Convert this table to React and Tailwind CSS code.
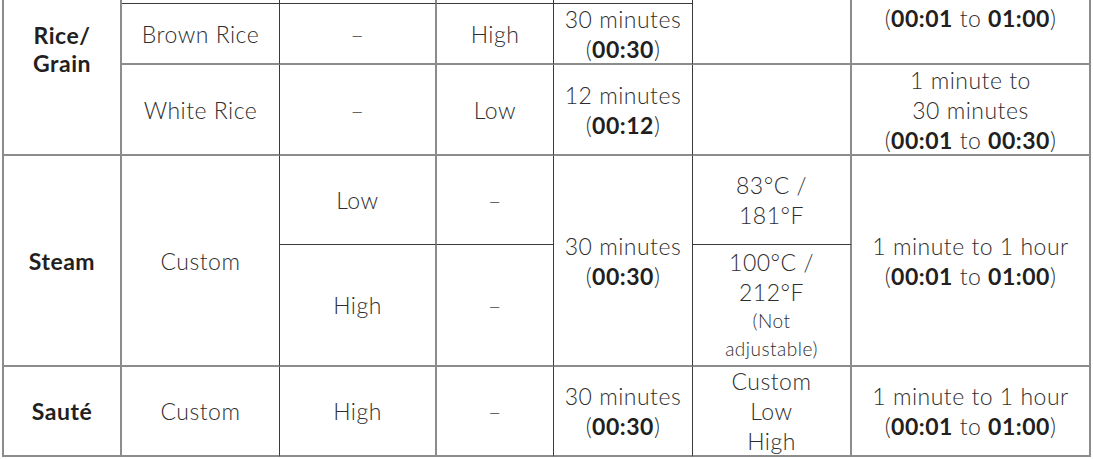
const G = 'border-r-2 border-r-[#8c8c8c]';
const D = 'border-r border-r-[#3a3a3a]';
const GB = 'border-b-2 border-b-[#8c8c8c]';
const DB = 'border-b border-b-[#3a3a3a]';

const Cell = ({ className = '', lead = 'leading-[30px]', children }) => (
  <div className={`flex flex-col items-center justify-center text-center ${lead} ${className}`}>
    {children}
  </div>
);

const B = ({ children }) => <span className="font-bold text-[#231f20]">{children}</span>;

const Time = ({ mins, code }) => (
  <>
    <span>{mins} minutes</span>
    <span>
      (<B>{code}</B>)
    </span>
  </>
);

const Range = ({ first, to }) => (
  <>
    {first}
    <span>
      (<B>00:01</B> to <B>{to}</B>)
    </span>
  </>
);

const Dash = () => <span className="text-[#666]">–</span>;

export default function App() {
  return (
    <div className="h-[459px] w-[1093px] overflow-hidden bg-white">
      <div
        className="ml-[2px] -mt-[57px] grid grid-cols-[118px_158px_157px_117px_139px_159px_239px] grid-rows-[61px_61px_91px_89px_122px_90px] border-l-2 border-l-[#8c8c8c] text-[23px] font-light tracking-[0.5px] text-[#2e2e2e]"
        style={{ fontFamily: 'Lato, "Open Sans", sans-serif', boxSizing: 'content-box' }}
      >
        {/* Rice / Grain */}
        <Cell lead="leading-[28px]" className={`col-start-1 row-start-1 row-span-3 ${G} ${GB} font-bold text-[#231f20]`}>
          <span>Rice/</span>
          <span>Grain</span>
        </Cell>
        <Cell className={`col-start-2 row-start-1 ${D} ${DB}`} />
        <Cell className={`col-start-3 row-start-1 ${G} ${DB}`} />
        <Cell className={`col-start-4 row-start-1 ${D} ${DB}`} />
        <Cell className={`col-start-5 row-start-1 ${D} ${DB}`} />
        <Cell className={`col-start-6 row-start-1 row-span-2 ${G} ${GB}`} />
        <Cell className={`col-start-7 row-start-1 row-span-2 ${G} ${GB}`}>
          <Range first="1 minute to 1 hour" to="01:00" />
        </Cell>

        {/* Brown rice */}
        <Cell className={`col-start-2 row-start-2 ${D} ${GB}`}>Brown Rice</Cell>
        <Cell className={`col-start-3 row-start-2 ${G} ${GB}`}>
          <Dash />
        </Cell>
        <Cell className={`col-start-4 row-start-2 ${D} ${GB}`}>High</Cell>
        <Cell className={`col-start-5 row-start-2 ${D} ${GB}`}>
          <Time mins="30" code="00:30" />
        </Cell>

        {/* White rice */}
        <Cell className={`col-start-2 row-start-3 ${D} ${GB}`}>White Rice</Cell>
        <Cell className={`col-start-3 row-start-3 ${G} ${GB}`}>
          <Dash />
        </Cell>
        <Cell className={`col-start-4 row-start-3 ${D} ${GB}`}>Low</Cell>
        <Cell className={`col-start-5 row-start-3 ${D} ${GB}`}>
          <Time mins="12" code="00:12" />
        </Cell>
        <Cell className={`col-start-6 row-start-3 ${G} ${GB}`} />
        <Cell className={`col-start-7 row-start-3 ${G} ${GB}`}>
          <span>1 minute to</span>
          <Range first="30 minutes" to="00:30" />
        </Cell>

        {/* Steam */}
        <Cell className={`col-start-1 row-start-4 row-span-2 ${G} ${GB} font-bold text-[#231f20]`}>Steam</Cell>
        <Cell className={`col-start-2 row-start-4 row-span-2 ${D} ${GB}`}>Custom</Cell>
        <Cell className={`col-start-3 row-start-4 ${G} ${DB}`}>Low</Cell>
        <Cell className={`col-start-4 row-start-4 ${D} ${DB}`}>
          <Dash />
        </Cell>
        <Cell className={`col-start-5 row-start-4 row-span-2 ${D} ${GB}`}>
          <Time mins="30" code="00:30" />
        </Cell>
        <Cell className={`col-start-6 row-start-4 ${G} ${DB}`}>
          <span>83°C /</span>
          <span>181°F</span>
        </Cell>
        <Cell className={`col-start-7 row-start-4 row-span-2 ${G} ${GB}`}>
          <Range first="1 minute to 1 hour" to="01:00" />
        </Cell>
        <Cell className={`col-start-3 row-start-5 ${G} ${GB}`}>High</Cell>
        <Cell className={`col-start-4 row-start-5 ${D} ${GB}`}>
          <Dash />
        </Cell>
        <Cell className={`col-start-6 row-start-5 ${G} ${GB}`}>
          <span>100°C /</span>
          <span>212°F</span>
          <span className="text-[19px] leading-[28px]">(Not</span>
          <span className="text-[19px] leading-[28px]">adjustable)</span>
        </Cell>

        {/* Sauté */}
        <Cell className={`col-start-1 row-start-6 ${G} ${GB} font-bold text-[#231f20]`}>Sauté</Cell>
        <Cell className={`col-start-2 row-start-6 ${D} ${GB}`}>Custom</Cell>
        <Cell className={`col-start-3 row-start-6 ${G} ${GB}`}>High</Cell>
        <Cell className={`col-start-4 row-start-6 ${D} ${GB}`}>
          <Dash />
        </Cell>
        <Cell className={`col-start-5 row-start-6 ${D} ${GB}`}>
          <Time mins="30" code="00:30" />
        </Cell>
        <Cell className={`col-start-6 row-start-6 ${G} ${GB}`}>
          <span>Custom</span>
          <span>Low</span>
          <span>High</span>
        </Cell>
        <Cell className={`col-start-7 row-start-6 ${G} ${GB}`}>
          <Range first="1 minute to 1 hour" to="01:00" />
        </Cell>
      </div>
    </div>
  );
}
